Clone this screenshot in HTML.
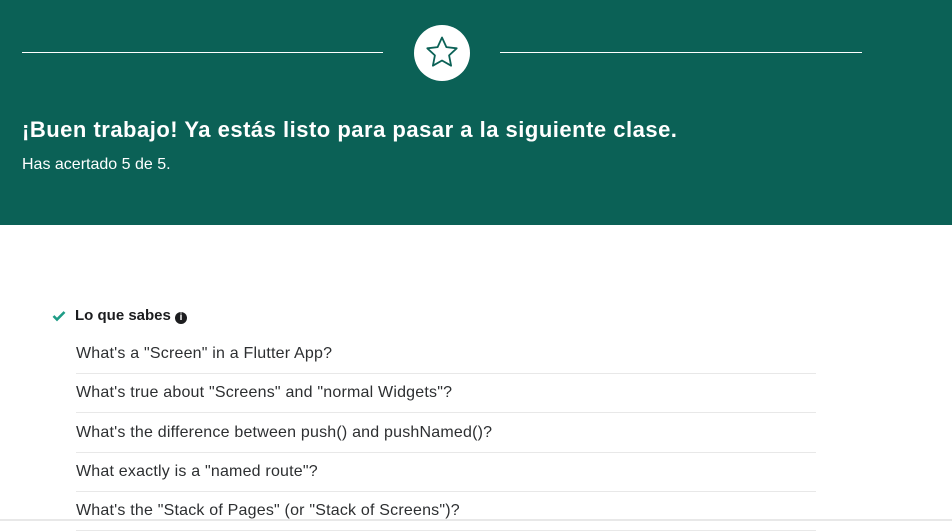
<!DOCTYPE html>
<html><head><style>
body{margin:0;width:952px;height:521px;overflow:hidden;background:#fff;font-family:"Liberation Sans",sans-serif;position:relative}
.hd{position:absolute;left:0;top:0;width:952px;height:225px;background:#0b6156}
.ln{position:absolute;top:52px;height:1px;background:#fff}
.c{position:absolute;left:414px;top:25px;width:56px;height:56px;border-radius:50%;background:#fff}
h1{position:absolute;left:22px;top:117px;margin:0;color:#fff;font-size:22px;letter-spacing:0.5px;font-weight:bold}
.s{position:absolute;left:22px;top:156px;color:#fff;font-size:16px}
.t{position:absolute;left:75px;top:307px;font-size:15px;font-weight:bold;color:#1c1d1f}
.q{position:absolute;left:76px;width:740px;font-size:16px;letter-spacing:0.2px;color:#2d2f31;border-bottom:1px solid #e8e8e8;height:39px;line-height:39px}
</style></head><body>
<div class="hd">
<div class="ln" style="left:22px;width:361px"></div>
<div class="ln" style="left:500px;width:362px"></div>
<div class="c"><svg width="56" height="56" viewBox="0 0 56 56"><path d="M28 12.5l4.4 9.6 10.3 1.2-7.6 7.1 2 10.3-9.1-5.2-9.1 5.2 2-10.3-7.6-7.1 10.3-1.2z" fill="none" stroke="#0b6156" stroke-width="1.8" stroke-linejoin="round"/></svg></div>
<h1>¡Buen trabajo! Ya estás listo para pasar a la siguiente clase.</h1>
<div class="s">Has acertado 5 de 5.</div>
</div>
<svg style="position:absolute;left:52px;top:310px" width="14" height="12" viewBox="0 0 14 12"><path d="M1.5 6l3.5 3.5L12.5 2" fill="none" stroke="#1e9c86" stroke-width="2.6"/></svg>
<div class="t">Lo que sabes <span style="display:inline-block;width:12px;height:12px;border-radius:50%;background:#1c1d1f;color:#fff;font-size:10px;text-align:center;line-height:12px;vertical-align:0px">i</span></div>
<div class="q" style="top:334px">What's a "Screen" in a Flutter App?</div>
<div class="q" style="top:373px">What's true about "Screens" and "normal Widgets"?</div>
<div class="q" style="top:413px">What's the difference between push() and pushNamed()?</div>
<div class="q" style="top:452px">What exactly is a "named route"?</div>
<div class="q" style="top:491px">What's the "Stack of Pages" (or "Stack of Screens")?</div>
<div style="position:absolute;left:0;top:519px;width:952px;height:2px;background:#e8e8e8"></div>
</body></html>
